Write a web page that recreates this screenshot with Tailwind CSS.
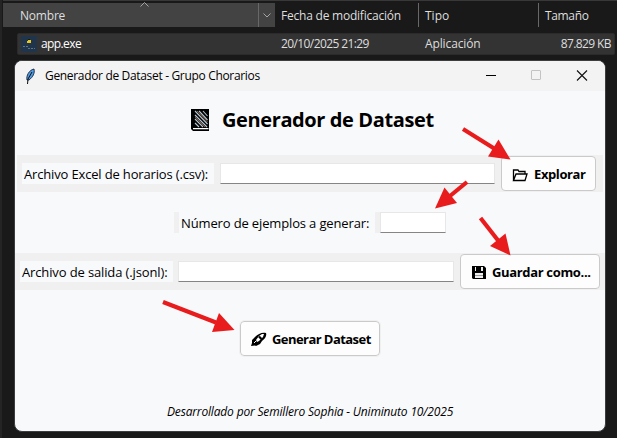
<!DOCTYPE html>
<html lang="es">
<head>
<meta charset="utf-8">
<title>Generador de Dataset - Grupo Chorarios</title>
<script src="https://cdn.jsdelivr.net/npm/@tailwindcss/browser@4"></script>
</head>
<body class="bg-[#191919]">
<div class="relative w-[617px] h-[438px] overflow-hidden bg-[#191919] border-l-2 border-[#242424] font-['Open_Sans','Noto_Sans',sans-serif] whitespace-nowrap">
  <!-- File list -->
  <header class="flex h-[27px] pt-[2px] ml-px border-t border-[#383838] text-[12px] leading-[23px] text-[#dedede]">
    <div class="relative flex w-[272px] bg-[#434343]">
      <span class="w-[256px] pl-[17px] pt-px border-r border-[#686868] tracking-[-0.2px]">Nombre</span>
      <svg class="m-auto" width="8" height="5" viewBox="0 0 8 5" fill="none" stroke="#a5a5a5"><path d="M.5.5 4 4 7.500.5"/></svg>
      <svg class="absolute left-[137px] top-[-1px]" width="9" height="5" viewBox="0 0 9 5" fill="none" stroke="#a5a5a5"><path d="M.5 4.500 4.500.5 8.500 4.500"/></svg>
    </div>
    <span class="w-[144px] pl-[6px] pt-px border-r border-[#686868] tracking-[-0.22px]">Fecha de modificación</span>
    <span class="w-[120px] pl-[6px] pt-px border-r border-[#686868]">Tipo</span>
    <span class="pl-[6px] pt-px tracking-[-0.35px]">Tamaño</span>
  </header>
  <div class="flex items-center mt-[6px] ml-[15px] w-[598px] h-[22px] rounded-[2px] bg-[#333333] border border-[#2b2b2b] text-[12px] text-[#dedede]">
    <svg class="ml-[3px]" width="16" height="16" viewBox="0 0 16 16"><path fill="#20354b" d="M0 0h16v16H0z"/><path fill="#eac71d" d="M7 4h3v3H6V5h1z"/><path fill="#111c26" d="M7 3h2v1H7z"/><path stroke="#70858b" stroke-width=".8" stroke-dasharray="2 1" d="M2 10.500h5M7 12.500h7"/></svg>
    <span class="w-[240px] ml-[4px] text-white tracking-[-0.6px]">app.exe</span>
    <span class="w-[144px] tracking-[-0.6px]">20/10/2025 21:29</span>
    <span class="tracking-[-0.12px]">Aplicación</span>
    <span class="ml-auto mr-[3px] tracking-[-0.6px]">87.829 KB</span>
  </div>

  <!-- Application window -->
  <main class="absolute left-[12px] top-[60px] w-[592px] h-[372px] rounded-[8px] overflow-hidden border border-[#3b3d3f] bg-[#f8f9fb] text-black">
    <div class="flex items-center h-[30px] bg-[#f3f3f3] text-[12px]">
      <svg class="ml-[10px]" width="11" height="17" viewBox="0 0 11 17"><path d="M2 12C1 8 4 2 9 1c1 4-1 8-5 11z" fill="#4f9ae5" stroke="#152334" stroke-width=".9"/><path d="M7 4 3 11 2.500 16" fill="none" stroke="#0b0e12"/></svg>
      <span class="ml-[9px] tracking-[-0.33px]">Generador de Dataset - Grupo Chorarios</span>
      <svg class="ml-auto mr-[16px]" width="104" height="12" viewBox="0 0 104 12" fill="none"><path d="M1 5.500h10" stroke="#000"/><rect x="46.500" y=".5" width="9" height="9" rx=".5" stroke="#c3c3c3"/><path d="m92 .5 10 10m0-10-10 10" stroke="#111" stroke-width="1.100"/></svg>
    </div>

    <h1 class="flex items-center h-[28px] mt-[15px] pl-[174px] text-[20px] font-bold">
      <svg width="22" height="24" viewBox="0 0 22 24"><path d="M2 1h18v22H4l-2-2z"/><path d="M6 3 18.500 16M10 3l8.500 9M14 3l4.500 5M6 7l12 12M6 11l8 8M6 15l4 4" stroke="#b4c4d0" stroke-width="1.100"/><path d="M8 3 18.500 14M6 9l10 10" stroke="#b98765" stroke-width=".7"/><path d="M4 20.700h15.500" stroke="#fff" stroke-width="1.200"/></svg>
      <span class="ml-[11px] tracking-[-0.39px]">Generador de Dataset</span>
    </h1>

    <div class="flex items-center w-[586px] h-[37px] mt-[21px] ml-[2px] pl-[5px] bg-[#f0f0f0]">
      <label class="w-[192px] h-[21px] pl-[2px] bg-[#f8f9fb] text-[13px] leading-[23px] tracking-[-0.16px]">Archivo Excel de horarios (.csv):</label>
      <span class="w-[275px] h-[21px] ml-[6px] bg-white border border-[#e7e7e7] border-b-[#858585]"></span>
      <button class="flex items-center w-[95px] h-[35px] ml-[6px] pl-[10px] rounded-[4px] border border-[#cacaca] bg-[#fdfdfd] text-[13px] font-bold">
        <svg class="mt-[2px]" width="16" height="14" viewBox="0 0 16 14" fill="none" stroke="#000" stroke-width="1.300"><path d="M1.500 12.500V2H6l1 1.500h6V6M1.500 12.500 4 6h11l-2 6.500z"/></svg>
        <span class="ml-[6px] pt-[2px] tracking-[-0.4px]">Explorar</span>
      </button>
    </div>

    <div class="flex h-[21px] mt-[20px] ml-[159px] text-[13px] leading-[23px]">
      <i class="w-[5px] bg-[#f0f0f0]"></i>
      <label class="w-[196px] pl-[2px] tracking-[-0.14px]">Número de ejemplos a generar:</label>
      <i class="w-[5px] bg-[#f0f0f0]"></i>
      <span class="w-[66px] bg-white border border-[#e7e7e7] border-b-[#858585]"></span>
    </div>

    <div class="flex items-center h-[37px] mt-[20px] pl-[5px] bg-[#f0f0f0]">
      <label class="w-[153px] h-[21px] pl-[2px] bg-[#f8f9fb] text-[13px] leading-[23px] tracking-[-0.13px]">Archivo de salida (.jsonl):</label>
      <span class="w-[276px] h-[21px] ml-[5px] bg-white border border-[#e7e7e7] border-b-[#858585]"></span>
      <button class="flex items-center w-[140px] h-[35px] ml-[6px] pl-[10px] rounded-[4px] border border-[#cacaca] bg-[#fdfdfd] text-[13px] font-bold">
        <svg width="16" height="16" viewBox="0 0 16 16"><path d="M1 2h12l2 2v11H2l-1-1z"/><path fill="#eee" d="M4 3h1v4H4zM10 3h2v4h-2zM4 9h8v5H4z"/><path d="M4 11.500h8" stroke="#999"/></svg>
        <span class="ml-[5px] pt-[2px] tracking-[-0.34px]">Guardar como...</span>
      </button>
    </div>

    <button class="flex items-center w-[140px] h-[35px] mt-[31px] ml-[225px] pl-[10px] rounded-[4px] border border-[#cacaca] bg-[#fdfdfd] outline outline-[#f0f0f0] text-[13px] font-bold">
      <svg width="16" height="16" viewBox="0 0 16 16"><path d="M15 2C11 1 7 3 4 6L1 9v3l-1 3 4-.5 1 .5 4-2 2-3c3-2 5-5 4-8z"/><path d="m5 9 3-4 3-2h2l-1 3-4 4-2 1z" fill="#fff"/><path d="m8 5.500 2.500 2.500" stroke="#000" stroke-width="2.200"/><path d="m3 12 2-2" stroke="#fff"/></svg>
      <span class="ml-[5px] pt-[2px] tracking-[-0.56px]">Generar Dataset</span>
    </button>

    <footer class="mt-[47px] ml-[152px] text-[12px] leading-[18px] italic tracking-[-0.17px]">Desarrollado por Semillero Sophia - Uniminuto 10/2025</footer>
  </main>

  <!-- Guidance arrows -->
  <svg class="absolute top-0 left-0 -ml-[2px]" width="617" height="438" viewBox="0 0 617 438" fill="#e81c1c">
    <g stroke="#e81c1c" stroke-width="4.200"><path d="m463 129 32 20"/><path d="m467 182-17 14"/><path d="m480.500 218 18 23"/><path d="m163 302 53 20.500"/></g>
    <path d="m510.500 159.500-12-20-10.500 17z"/><path d="m435 208.500 9.500-21L457 203z"/><path d="m510.500 255.500-5-22L490 246z"/><path d="m234.500 330-15.500-17-7 19z"/>
  </svg>
</div>
</body>
</html>
